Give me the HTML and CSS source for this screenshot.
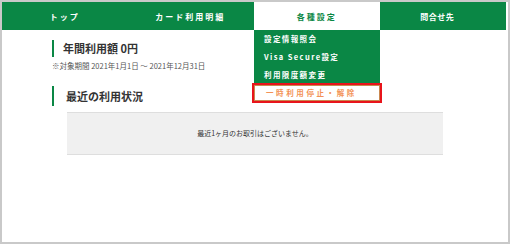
FILE: index.html
```html
<!DOCTYPE html>
<html lang="ja">
<head>
    <meta charset="UTF-8">
    <meta name="viewport" content="width=device-width, initial-scale=1.0">
    <title>会員メニュー</title>
    <link rel="stylesheet" href="styles.css">
</head>
<body>
    <div id="frame">
        <div id="global-nav">
            <div class="nav-tab">トップ</div>
            <div class="nav-tab">カード利用明細</div>
            <div class="nav-tab active">
                各種設定
                <!-- dropdown opened under the active tab -->
                <ul class="dropdown">
                    <li class="dropdown-item">設定情報照会</li>
                    <li class="dropdown-item">Visa Secure設定</li>
                    <li class="dropdown-item">利用限度額変更</li>
                    <li class="dropdown-item highlight">一時利用停止・解除</li>
                </ul>
            </div>
            <div class="nav-tab contact"><span class="contact-label">問合せ先</span></div>
        </div>

        <div id="content">
            <h2 class="section-title first">年間利用額 0円</h2>
            <p class="period">※対象期間 2021年1月1日 ～ 2021年12月31日</p>

            <h2 class="section-title second">最近の利用状況</h2>
            <div class="notice-box">最近1ヶ月のお取引はございません。</div>
        </div>
    </div>
</body>
</html>
```

FILE: styles.css
```css
body {
    margin: 0;
    padding: 0;
    font-family: "Noto Sans CJK JP", "Noto Sans", sans-serif;
    background-color: #ffffff;
    color: #333333;
}

#frame {
    width: 510px;
    height: 244px;
    box-sizing: border-box;
    border: 2px solid #c9c9c9;
    background-color: #ffffff;
}

#global-nav {
    display: flex;
    width: 504px;
    height: 28px;
    background-color: #0a8745;
}

.nav-tab {
    position: relative;
    flex: 1;
    display: flex;
    align-items: center;
    justify-content: center;
    color: #ffffff;
    font-size: 8px;
    font-weight: bold;
    letter-spacing: 2px;
}

.nav-tab.active {
    background-color: #ffffff;
    color: #0a8745;
    margin: 0 1px;
}

.nav-tab.contact {
    letter-spacing: 0.5px;
}

.contact-label {
    margin-right: 12px;
}

.dropdown {
    position: absolute;
    top: 28px;
    left: 0;
    width: 126px;
    margin: 0;
    padding: 0;
    list-style: none;
    background-color: #0a8745;
    z-index: 1;
}

.dropdown-item {
    height: 18px;
    line-height: 18px;
    padding-left: 10px;
    color: #ffffff;
    font-size: 7.5px;
    font-weight: bold;
    letter-spacing: 1.4px;
}

.dropdown-item.highlight {
    margin-top: 1px;
    height: 14px;
    line-height: 14px;
    padding-left: 11px;
    background-color: #ffffff;
    color: #f39256;
    border: 1px solid #c9874f;
    outline: 2px solid #e8141b;
    letter-spacing: 2.6px;
}

#content {
    padding-left: 50px;
    padding-top: 10px;
}

.section-title {
    margin: 0;
    border-left: 2px solid #0a8745;
    font-size: 11px;
    font-weight: bold;
    color: #333333;
}

.section-title.first {
    height: 17px;
    line-height: 17px;
    padding-left: 9px;
}

.section-title.second {
    margin-top: 15px;
    height: 20px;
    line-height: 20px;
    padding-left: 12px;
}

.period {
    margin: 4px 0 0 0;
    font-size: 7.5px;
    line-height: 10px;
    color: #555555;
}

.notice-box {
    margin: 6px 0 0 15px;
    width: 376px;
    height: 41px;
    line-height: 41px;
    background-color: #f0f0f0;
    border-top: 1px solid #dedede;
    border-bottom: 1px solid #dedede;
    text-align: center;
    font-size: 7px;
    color: #333333;
}
```
